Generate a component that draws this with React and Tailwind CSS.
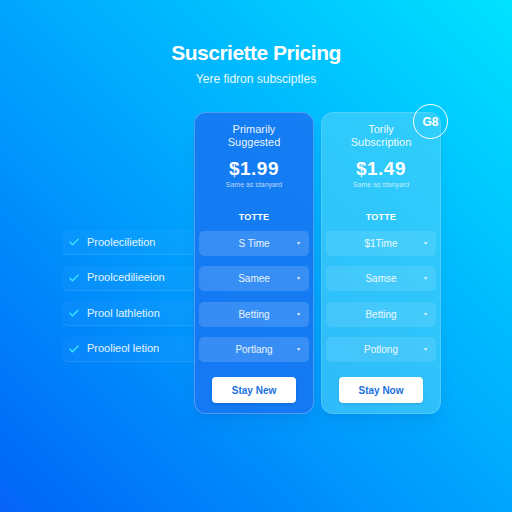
import React from 'react';

const features = [
  'Proolecilietion',
  'Proolcedilieeion',
  'Prool lathletion',
  'Proolieol letion',
];

const plans = [
  {
    name: ['Primarily', 'Suggested'],
    price: '$1.99',
    note: 'Same as stanyard',
    rows: ['S Time', 'Samee', 'Betting', 'Portlang'],
    cta: 'Stay New',
    card: 'bg-[#1677f2]/90 border-white/25',
    row: 'bg-white/15',
  },
  {
    name: ['Torily', 'Subscription'],
    price: '$1.49',
    note: 'Same as stanyard',
    rows: ['$1Time', 'Samse', 'Betting', 'Potlong'],
    cta: 'Stay Now',
    card: 'bg-[#4fd0f8]/60 border-white/15',
    row: 'bg-white/10',
    badge: 'G8',
  },
];

function Check() {
  return (
    <svg width="12" height="12" viewBox="0 0 24 24" fill="none" stroke="#35e3ff" strokeWidth="3" strokeLinecap="round" strokeLinejoin="round">
      <path d="M4 12.5l5 5L20 6.5" />
    </svg>
  );
}

function PlanCard({ plan }) {
  return (
    <div className={`relative w-[120px] h-[302px] rounded-[12px] border ${plan.card} shadow-lg shadow-blue-900/10 flex flex-col items-center px-[4px] pt-[10px]`}>
      {plan.badge && (
        <div className="absolute -top-[9px] -right-[8px] w-[35px] h-[35px] rounded-full border-[1.5px] border-white flex items-center justify-center text-white text-[12px] font-bold">
          {plan.badge}
        </div>
      )}
      <div className="text-white/95 text-[11px] leading-[13px] text-center">
        <div>{plan.name[0]}</div>
        <div>{plan.name[1]}</div>
      </div>
      <div className="mt-[9px] text-white text-[19px] leading-[22px] font-bold tracking-wide">{plan.price}</div>
      <div className="text-white/70 text-[7px] leading-[9px]">{plan.note}</div>
      <div className="mt-[22px] text-white text-[9px] font-bold tracking-wide">TOTTE</div>
      <div className="mt-[6px] w-full flex flex-col gap-[10.5px]">
        {plan.rows.map((r) => (
          <div key={r} className={`relative h-[25px] rounded-[5px] ${plan.row} flex items-center justify-center text-white/90 text-[10px]`}>
            {r}
            <span className="absolute right-[9px] text-[6px] text-white/80">▾</span>
          </div>
        ))}
      </div>
      <button className="mt-[15px] w-[84px] h-[26px] rounded-[4px] bg-white text-[#1b6fe0] text-[10px] font-bold shadow">
        {plan.cta}
      </button>
    </div>
  );
}

export default function App() {
  return (
    <div className="w-[512px] h-[512px] bg-linear-to-tr from-[#0863f7] to-[#00e2ff] flex flex-col items-center font-['Liberation_Sans',Arial,sans-serif] overflow-hidden">
      <h1 className="mt-[41px] text-white text-[21px] leading-[24px] font-bold tracking-[-0.5px]">Suscriette Pricing</h1>
      <p className="mt-[7px] text-white/90 text-[12px] leading-[14px]">Yere fidron subsciptles</p>
      <div className="mt-[26px] self-start ml-[62px] flex items-start">
        <div className="mt-[118px] w-[132px] flex flex-col gap-[10.5px]">
          {features.map((f) => (
            <div key={f} className="h-[25px] rounded-l-[6px] bg-white/[0.03] border-b border-white/10 flex items-center gap-[7px] pl-[6px] text-white/90 text-[11px]">
              <Check />
              {f}
            </div>
          ))}
        </div>
        <div className="flex gap-[7px]">
          {plans.map((p) => (
            <PlanCard key={p.price} plan={p} />
          ))}
        </div>
      </div>
    </div>
  );
}
